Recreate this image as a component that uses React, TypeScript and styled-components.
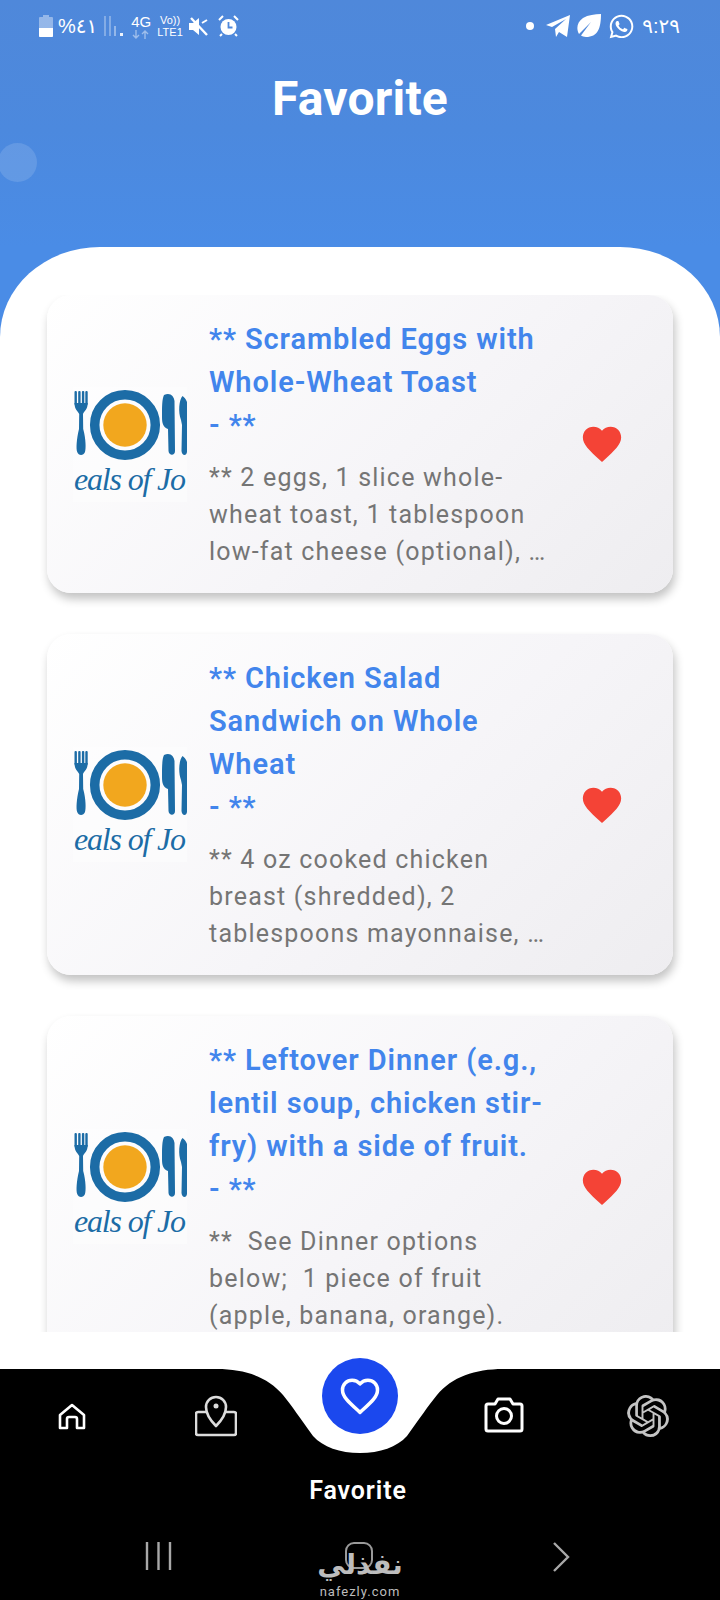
import styled, { createGlobalStyle } from "styled-components";
import { FaWhatsapp } from "react-icons/fa";
import { SiOpenai } from "react-icons/si";

const GlobalStyle = createGlobalStyle`
    html, body {
        margin: 0;
        padding: 0;
        background: #000;
    }
    * {
        box-sizing: border-box;
    }
`;

const Page = styled.div`
    width: 720px;
    height: 1600px;
    display: flex;
    flex-direction: column;
    overflow: hidden;
    position: relative;
    font-family: Roboto, "Noto Sans", sans-serif;
    background: linear-gradient(180deg, #4f88da 0%, #4c89de 130px, #4a8ce6 247px, #4a8ce6 100%);
`;
const Header = styled.header`
    height: 247px;
    flex-shrink: 0;
    display: flex;
    flex-direction: column;
`;
const StatusBar = styled.div`
    height: 52px;
    padding: 0 40px 0 39px;
    display: flex;
    align-items: center;
    justify-content: space-between;
    color: #fff;
`;
const StatusGroup = styled.div`
    display: flex;
    align-items: center;
    gap: ${(p: { $gap: number }) => p.$gap}px;
`;
const StatusText = styled.span`
    font-family: "Liberation Sans", "DejaVu Sans", sans-serif;
    font-size: 20px;
    line-height: 22px;
    white-space: nowrap;
`;
const NetworkLabel = styled.div`
    display: flex;
    flex-direction: column;
    align-items: center;
    font-family: "Liberation Sans", sans-serif;
    font-size: ${(p: { $size: number }) => p.$size}px;
    line-height: ${(p: { $size: number }) => p.$size + 1}px;
`;
const Title = styled.h1`
    margin: 18px 0 0;
    text-align: center;
    color: #fff;
    font-size: 48px;
    line-height: 58px;
    font-weight: 700;
    letter-spacing: 0.2px;
`;
const TouchDot = styled.div`
    position: absolute;
    left: -2px;
    top: 143px;
    width: 39px;
    height: 39px;
    border-radius: 50%;
    background: rgba(255, 255, 255, 0.13);
`;
const Sheet = styled.main`
    height: 1122px;
    flex-shrink: 0;
    padding-top: 48px;
    background: #fff;
    border-radius: 100px 100px 0 0 / 90px 90px 0 0;
`;
const CardList = styled.div`
    height: 1037px;
    padding: 0 47px;
    display: flex;
    flex-direction: column;
    gap: 41px;
    overflow: hidden;
    /* shadow room at the top of the clip */
    clip-path: inset(-20px 0 0 0);
`;
const Card = styled.article`
    flex-shrink: 0;
    display: flex;
    align-items: center;
    padding: 23px 0 23px 26px;
    border-radius: 24px;
    background: linear-gradient(135deg, #ffffff 0%, #f6f5f8 55%, #eeedf0 100%);
    box-shadow: 2px 6px 10px rgba(0, 0, 0, 0.24);
`;
const LogoBox = styled.div`
    width: 114px;
    height: 115px;
    flex-shrink: 0;
    margin-right: 22px;
`;
const CardBody = styled.div`
    width: 338px;
    flex-shrink: 0;
`;
const CardTitle = styled.h2`
    margin: 0 0 12px;
    color: #4285ec;
    font-size: 29px;
    line-height: 43px;
    font-weight: 600;
    letter-spacing: 0.9px;
    white-space: pre-line;
`;
const CardText = styled.p`
    margin: 0;
    color: #757575;
    font-size: 25px;
    line-height: 37px;
    letter-spacing: 1.2px;
    white-space: pre-wrap;
`;
const FavButton = styled.div`
    width: 46px;
    height: 46px;
    margin-left: 32px;
    flex-shrink: 0;
    color: #f44336;
`;
const BottomNav = styled.nav`
    flex: 1;
    position: relative;
    background: #000;
`;
const Notch = styled.svg`
    position: absolute;
    left: 0;
    top: -1px;
    width: 720px;
    height: 86px;
`;
const Fab = styled.div`
    position: absolute;
    left: 322px;
    top: -11px;
    width: 76px;
    height: 76px;
    border-radius: 50%;
    background: #1b48ee;
    display: flex;
    align-items: center;
    justify-content: center;
`;
const NavRow = styled.div`
    position: relative;
    height: 96px;
    padding-top: 26px;
    display: grid;
    grid-template-columns: repeat(5, 1fr);
    justify-items: center;
    align-items: start;
`;
const NavLabel = styled.div`
    text-align: center;
    color: #fff;
    font-size: 25px;
    line-height: 30px;
    font-weight: 600;
    letter-spacing: 0.9px;
    margin-top: 11px;
    padding-right: 4px;
`;
const SystemNav = styled.div`
    margin-top: 12px;
    padding: 0 58px;
    display: grid;
    grid-template-columns: repeat(3, 1fr);
    justify-items: center;
    color: #a8a8a8;
`;
const SysIcon = styled.div`
    padding-top: 24px;
`;
const Watermark = styled.div`
    position: relative;
    width: 90px;
    display: flex;
    flex-direction: column;
    align-items: center;
    color: #bdbdbd;
`;
const WatermarkFrame = styled.div`
    position: absolute;
    left: 30px;
    top: 24px;
    width: 28px;
    height: 27px;
    border: 2px solid #9a9a9a;
    border-radius: 9px;
`;
const WatermarkArabic = styled.div`
    position: relative;
    font-family: "DejaVu Sans", sans-serif;
    font-size: 28px;
    line-height: 36px;
    font-weight: 700;
    margin-top: 29px;
    white-space: nowrap;
`;
const WatermarkLatin = styled.div`
    font-size: 13px;
    line-height: 14px;
    letter-spacing: 1px;
    margin-top: 2px;
`;

const meals = [
    {
        title: "** Scrambled Eggs with Whole-Wheat Toast\n- **",
        text: "** 2 eggs, 1 slice whole-wheat toast, 1 tablespoon low-fat cheese (optional), …",
    },
    {
        title: "** Chicken Salad Sandwich on Whole Wheat\n- **",
        text: "** 4 oz cooked chicken breast (shredded), 2 tablespoons mayonnaise, …",
    },
    {
        title: "** Leftover Dinner (e.g., lentil soup, chicken stir-fry) with a side of fruit.\n- **",
        text: "**  See Dinner options below;  1 piece of fruit (apple, banana, orange).",
    },
];

const HEART_PATH =
    "M12 21.35l-1.45-1.32C5.4 15.36 2 12.28 2 8.5 2 5.42 4.42 3 7.5 3c1.74 0 3.41.81 4.5 2.09C13.09 3.81 14.76 3 16.5 3 19.58 3 22 5.42 22 8.5c0 3.78-3.4 6.86-8.55 11.54L12 21.35z";

function MealLogo() {
    return (
        <svg width="114" height="115" viewBox="0 0 114 115">
            <rect width="114" height="115" fill="#fff" opacity="0.4" />
            <g fill="#1c6ca6">
                <rect x="1.5" y="4" width="2.4" height="14" rx="1" />
                <rect x="5.2" y="4" width="2.4" height="14" rx="1" />
                <rect x="8.9" y="4" width="2.4" height="14" rx="1" />
                <rect x="12.3" y="4" width="2.4" height="14" rx="1" />
                <path d="M1.5 16 H14.7 C14.7 23 11 24 10 27 L10.2 42 C13 52 13 62 12 65 C10.5 69 5.5 69 4.2 65 C3 62 3.5 52 6 42 L6.2 27 C5 24 1.5 23 1.5 16 Z" />
                <path d="M91 8 C97 5 101 9 101.5 14 L102 64 C102 69 96 69 95.5 64 L95 42 C90 40 89 36 89 30 C89 20 89 12 91 8 Z" />
                <path d="M109.5 9 C106 13 105 25 108 33 L109 38 L108.5 64 C109 69 113.5 69 114 65 V15 C113 12 111 10 109.5 9 Z" />
            </g>
            <circle cx="52" cy="38" r="30.3" fill="none" stroke="#1c6ca6" strokeWidth="9.5" />
            <circle cx="52" cy="38" r="21.7" fill="#f2a71e" />
            <text
                x="1"
                y="103"
                fill="#1c6ca6"
                fontFamily="'Liberation Serif', serif"
                fontStyle="italic"
                fontSize="32"
                textLength="112"
                lengthAdjust="spacing"
            >
                eals of Jo
            </text>
        </svg>
    );
}

function StatusLeft() {
    return (
        <StatusGroup $gap={5}>
            <svg width="14" height="22" viewBox="0 0 14 22">
                <path d="M4 0h6v2h3a1 1 0 0 1 1 1v18a1 1 0 0 1-1 1H1a1 1 0 0 1-1-1V3a1 1 0 0 1 1-1h3z" fill="#fff" opacity="0.4" />
                <path d="M0 13h14v8a1 1 0 0 1-1 1H1a1 1 0 0 1-1-1z" fill="#fff" />
            </svg>
            <StatusText>%٤١</StatusText>
            <svg width="20" height="22" viewBox="0 0 20 22" style={{ marginLeft: 2 }}>
                <g fill="#fff">
                    <rect x="0" y="1" width="2" height="20" opacity="0.3" />
                    <rect x="5" y="1" width="2" height="20" opacity="0.3" />
                    <rect x="10" y="11" width="2" height="10" opacity="0.4" />
                    <rect x="16" y="18" width="3" height="3" opacity="0.9" />
                </g>
            </svg>
            <NetworkLabel $size={15} style={{ marginLeft: 2 }}>
                4G
                <svg width="18" height="9" viewBox="0 0 18 9">
                    <path d="M4 0v8M1 5l3 3 3-3M13 9V1M10 4l3-3 3 3" fill="none" stroke="#fff" strokeOpacity="0.45" strokeWidth="1.4" />
                </svg>
            </NetworkLabel>
            <NetworkLabel $size={11} style={{ marginLeft: 1 }}>
                <span>Vo))</span>
                <span>LTE1</span>
            </NetworkLabel>
            <svg width="21" height="21" viewBox="0 0 21 21">
                <path d="M1 7h4l6-5v17l-6-5H1z" fill="#fff" />
                <path d="M3 2l16 17" stroke="#fff" strokeWidth="2.4" />
                <path d="M14 7l5-3" stroke="#fff" strokeWidth="2" />
            </svg>
            <svg width="21" height="22" viewBox="0 0 21 22" style={{ marginLeft: 4 }}>
                <circle cx="10.5" cy="12" r="8" fill="#fff" />
                <path d="M10.5 7v5.5h4" fill="none" stroke="#4e88dc" strokeWidth="1.8" />
                <path d="M1 5l4-4M20 5l-4-4M4 19l-2 2M17 19l2 2" stroke="#fff" strokeWidth="2" />
            </svg>
        </StatusGroup>
    );
}

function StatusRight() {
    return (
        <StatusGroup $gap={7}>
            <svg width="8" height="8" viewBox="0 0 8 8" style={{ marginRight: 5 }}>
                <circle cx="4" cy="4" r="4" fill="#fff" />
            </svg>
            <svg width="24" height="23" viewBox="0 0 24 23">
                <path d="M24 0L21 22 13 17l-3 5-1-8L20 4 6 12 0 10z" fill="#fff" />
            </svg>
            <svg width="24" height="24" viewBox="0 0 24 24">
                <path d="M24 0C24 14 21 23 9 23c-2 0-4-.6-5-1.4L14 8 2 20C-1 15 0 8 6 4c5-3 12-4 18-4z" fill="#fff" />
            </svg>
            <FaWhatsapp size={27} color="#fff" />
            <StatusText style={{ fontSize: 20, letterSpacing: 1 }}>٩:٢٩</StatusText>
        </StatusGroup>
    );
}

export default function App() {
    return (
        <Page>
            <GlobalStyle />
            <Header>
                <StatusBar>
                    <StatusLeft />
                    <StatusRight />
                </StatusBar>
                <Title>Favorite</Title>
            </Header>
            <TouchDot />
            <Sheet>
                <CardList>
                    {meals.map((meal) => (
                        <Card key={meal.title}>
                            <LogoBox>
                                <MealLogo />
                            </LogoBox>
                            <CardBody>
                                <CardTitle>{meal.title}</CardTitle>
                                <CardText>{meal.text}</CardText>
                            </CardBody>
                            <FavButton>
                                <svg width="46" height="46" viewBox="0 0 24 24" fill="currentColor">
                                    <path d={HEART_PATH} />
                                </svg>
                            </FavButton>
                        </Card>
                    ))}
                </CardList>
            </Sheet>
            <BottomNav>
                <Notch viewBox="0 0 720 86">
                    <path
                        d="M217 1 C245 1 268 9 283 27 C292 38 300 50 313 68 C323 79 340 85 360 85 C380 85 397 79 407 68 C420 50 428 38 437 27 C452 9 475 1 503 1 Z"
                        fill="#fff"
                    />
                </Notch>
                <Fab>
                    <svg width="42" height="42" viewBox="0 0 24 24" fill="none" stroke="#fff" strokeWidth="2" strokeLinejoin="round">
                        <path d={HEART_PATH} />
                    </svg>
                </Fab>
                <NavRow>
                    <svg width="28" height="28" viewBox="0 0 28 28" fill="none" stroke="#fff" strokeWidth="2.6" strokeLinejoin="round" style={{ marginTop: 8 }}>
                        <path d="M2 25V12L14 2l12 10v13h-7v-9a2 2 0 0 0-2-2h-6a2 2 0 0 0-2 2v9z" />
                    </svg>
                    <svg width="42" height="42" viewBox="0 0 42 42" fill="none" stroke="#dcdcdc" strokeWidth="2.6" strokeLinejoin="round">
                        <path d="M11 17H3a2 2 0 0 0-2 2v19a2 2 0 0 0 2 2h36a2 2 0 0 0 2-2V19a2 2 0 0 0-2-2h-8" />
                        <path d="M21 31C16 26 11 20 11 12a10 10 0 0 1 20 0c0 8-5 14-10 19z" />
                        <circle cx="21" cy="11" r="2.5" fill="#dcdcdc" stroke="none" />
                    </svg>
                    <span />
                    <svg width="40" height="36" viewBox="0 0 40 36" fill="none" stroke="#fff" strokeWidth="3" strokeLinejoin="round" style={{ marginTop: 2 }}>
                        <path d="M2 9a2 2 0 0 1 2-2h7l3-5h12l3 5h7a2 2 0 0 1 2 2v23a2 2 0 0 1-2 2H4a2 2 0 0 1-2-2z" />
                        <circle cx="20" cy="19" r="7.5" />
                    </svg>
                    <SiOpenai size={42} color="#c4c4c4" />
                </NavRow>
                <NavLabel>Favorite</NavLabel>
                <SystemNav>
                    <SysIcon>
                        <svg width="27" height="28" viewBox="0 0 27 28" fill="none" stroke="currentColor" strokeWidth="2.4">
                            <path d="M2 0v28M13.5 0v28M25 0v28" />
                        </svg>
                    </SysIcon>
                    <Watermark>
                        <WatermarkFrame />
                        <WatermarkArabic>نفذلي</WatermarkArabic>
                        <WatermarkLatin>nafezly.com</WatermarkLatin>
                    </Watermark>
                    <SysIcon>
                        <svg width="18" height="30" viewBox="0 0 18 30" fill="none" stroke="currentColor" strokeWidth="2.4">
                            <path d="M2 1l14 14L2 29" />
                        </svg>
                    </SysIcon>
                </SystemNav>
            </BottomNav>
        </Page>
    );
}
